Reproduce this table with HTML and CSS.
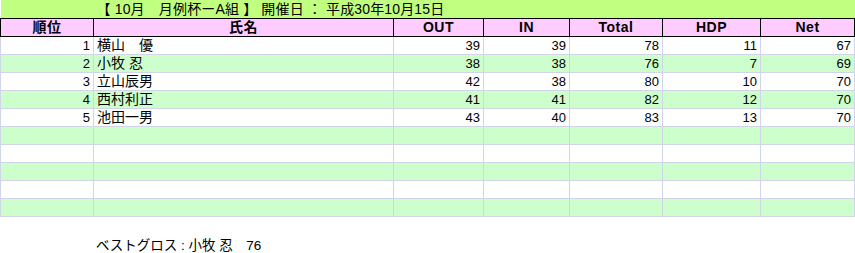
FILE: index.html
```html
<!DOCTYPE html>
<html lang="ja">
<head>
<meta charset="utf-8">
<link rel="stylesheet" href="styles.css">
</head>
<body>
<table class="score">
  <colgroup>
    <col class="c-rank"><col class="c-name"><col class="c-out"><col class="c-in"><col class="c-total"><col class="c-hdp"><col class="c-net">
  </colgroup>
  <tr class="title">
    <td></td>
    <td colspan="6">【 10月　月例杯ーA組 】 開催日 ： 平成30年10月15日</td>
  </tr>
  <tr class="head">
    <th>順位</th><th>氏名</th><th>OUT</th><th>IN</th><th>Total</th><th>HDP</th><th>Net</th>
  </tr>
  <tr class="odd"><td class="num">1</td><td class="name">横山　優</td><td class="num">39</td><td class="num">39</td><td class="num">78</td><td class="num">11</td><td class="num">67</td></tr>
  <tr class="even"><td class="num">2</td><td class="name">小牧 忍</td><td class="num">38</td><td class="num">38</td><td class="num">76</td><td class="num">7</td><td class="num">69</td></tr>
  <tr class="odd"><td class="num">3</td><td class="name">立山辰男</td><td class="num">42</td><td class="num">38</td><td class="num">80</td><td class="num">10</td><td class="num">70</td></tr>
  <tr class="even"><td class="num">4</td><td class="name">西村利正</td><td class="num">41</td><td class="num">41</td><td class="num">82</td><td class="num">12</td><td class="num">70</td></tr>
  <tr class="odd"><td class="num">5</td><td class="name">池田一男</td><td class="num">43</td><td class="num">40</td><td class="num">83</td><td class="num">13</td><td class="num">70</td></tr>
  <tr class="even"><td></td><td></td><td></td><td></td><td></td><td></td><td></td></tr>
  <tr class="odd"><td></td><td></td><td></td><td></td><td></td><td></td><td></td></tr>
  <tr class="even"><td></td><td></td><td></td><td></td><td></td><td></td><td></td></tr>
  <tr class="odd"><td></td><td></td><td></td><td></td><td></td><td></td><td></td></tr>
  <tr class="even"><td></td><td></td><td></td><td></td><td></td><td></td><td></td></tr>
</table>
<div class="best">ベストグロス : 小牧 忍　76</div>
</body>
</html>
```
FILE: styles.css
```css
html, body {
  margin: 0;
  padding: 0;
  background: #ffffff;
}
body {
  font-family: "Liberation Sans", "Noto Sans CJK JP", sans-serif;
  font-size: 13px;
  color: #000;
}
.score {
  border-collapse: collapse;
  table-layout: fixed;
  width: 854px;
}
.c-rank { width: 93px; }
.c-name { width: 300px; }
.c-out { width: 90px; }
.c-in { width: 86px; }
.c-total { width: 93px; }
.c-hdp { width: 98px; }
.c-net { width: 94px; }
.score td, .score th {
  height: 17px;
  padding: 0 3px;
  line-height: 17px;
  white-space: nowrap;
  overflow: hidden;
}
.title td {
  background: #c0ff80;
  height: 18px;
  padding: 0 3px;
  border: none;
  font-size: 14px;
  letter-spacing: 0.15px;
}
.head th {
  background: #ffccff;
  border: 1px solid #000;
  font-weight: bold;
  font-size: 14px;
  letter-spacing: 0.5px;
  text-align: center;
}
.odd td, .even td {
  border: 1px solid #d0d5e8;
}
.odd td { background: #ffffff; }
.even td { background: #ccffcc; }
.num { text-align: right; padding-right: 4px; }
.name { text-align: left; font-size: 14px; }
.best {
  margin-top: 20px;
  padding-left: 96px;
  line-height: 18px;
  font-size: 13.5px;
}
```
